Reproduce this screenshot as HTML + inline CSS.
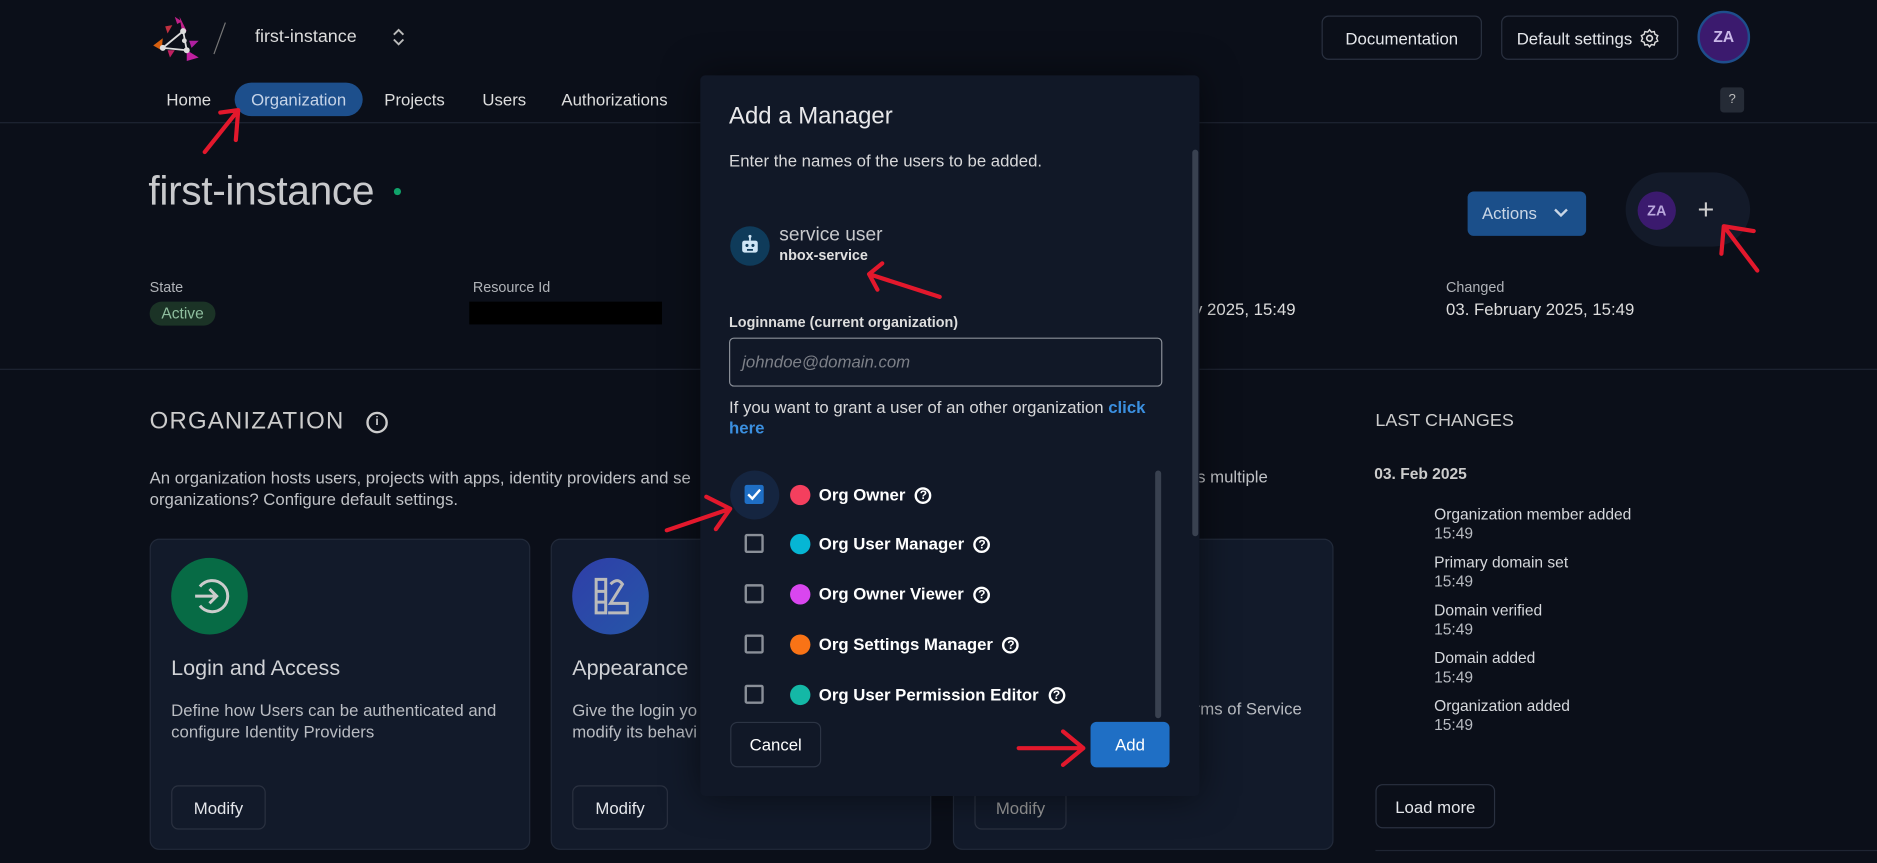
<!DOCTYPE html>
<html><head><meta charset="utf-8"><style>
html,body{margin:0;padding:0;background:#0b0f19;overflow:hidden;width:1877px;height:862px}
#s{position:absolute;left:0;top:0;width:1568px;height:721px;transform:scale(1.19707);transform-origin:0 0;font-family:"Liberation Sans",sans-serif;color:#e5e7eb}
.a{position:absolute;white-space:nowrap}
.btn{position:absolute;border:1px solid #2a3140;border-radius:6px;box-sizing:border-box;display:flex;align-items:center;justify-content:center;font-size:14px;color:#e5e7eb}
.card{position:absolute;top:450px;width:318px;height:260px;background:#121a2a;border:1px solid #222a3a;border-radius:8px;box-sizing:border-box}
.hl{position:absolute;height:1px;background:#1f2533}
.ev{position:absolute;left:1198px;font-size:13px;color:#d6d8dc;line-height:16px}
.ev span{color:#b9bcc2}
.cb{position:absolute;left:622px;width:16px;height:16px;border:2px solid #8a8f98;border-radius:2px;box-sizing:border-box}
.dot{position:absolute;left:660px;width:17px;height:17px;border-radius:50%}
.rl{position:absolute;left:684px;font-size:14px;color:#fff;font-weight:bold}
.q{display:inline-block;width:14px;height:14px;border:2px solid #fff;border-radius:50%;font-size:10px;text-align:center;margin-left:8px;vertical-align:middle;box-sizing:border-box;line-height:11px}
</style></head><body><div id="s">
<!-- header -->
<svg class="a" style="left:126px;top:12px" width="42" height="40" viewBox="0 0 42 40">
<polygon points="20,2 26,6 22,8" fill="#c0208a"/><polygon points="24,2 30,14 26,14" fill="#c0208a"/>
<polygon points="12,10 18,9 14,16" fill="#c03040"/><polygon points="2,26 10,20 9,30" fill="#d66010"/>
<polygon points="32,22 40,22 34,28" fill="#b020a0"/><polygon points="14,30 20,30 16,36" fill="#c02060"/>
<polygon points="30,30 40,36 30,39" fill="#c020a0"/>
<path d="M27,14 L10,28 L30,30 Z M27,14 L30,30" stroke="#ddd" stroke-width="1.5" fill="none"/>
<circle cx="27" cy="14" r="2.5" fill="#ddd"/><circle cx="10" cy="28" r="2.5" fill="#ddd"/><circle cx="30" cy="30" r="2.5" fill="#ddd"/><circle cx="28" cy="22" r="2" fill="#ddd"/>
</svg>
<div class="a" style="left:183px;top:18px;width:1px;height:28px;background:#777;transform:rotate(20deg)"></div>
<div class="a" style="left:213px;top:22px;font-size:15px;color:#ddd">first-instance</div>
<svg class="a" style="left:327px;top:22px" width="12" height="18" viewBox="0 0 12 18"><path d="M2,7 L6,3 L10,7 M2,11 L6,15 L10,11" stroke="#bbb" stroke-width="1.6" fill="none"/></svg>
<div class="btn" style="left:1104px;top:13px;width:134px;height:37px">Documentation</div>
<div class="btn" style="left:1254px;top:13px;width:148px;height:37px;justify-content:flex-start;padding-left:12px">Default settings
<svg style="margin-left:5px" width="18" height="18" viewBox="0 0 24 24"><circle cx="12" cy="12" r="3.2" stroke="#ddd" stroke-width="1.8" fill="none"/><path d="M12 2.5l2 2.6 3.2-.6.9 3.1 3 1.4-1.3 3 1.3 3-3 1.4-.9 3.1-3.2-.6-2 2.6-2-2.6-3.2.6-.9-3.1-3-1.4 1.3-3-1.3-3 3-1.4.9-3.1 3.2.6z" stroke="#ddd" stroke-width="1.6" fill="none"/></svg></div>
<div class="a" style="left:1418px;top:9px;width:40px;height:40px;border-radius:50%;background:#3b1a6e;border:2px solid #1e4e8c;color:#c9b8e8;font-size:13px;font-weight:bold;text-align:center;line-height:40px">ZA</div>
<div class="a" style="left:139px;top:75px;font-size:14px;color:#ddd">Home</div>
<div class="a" style="left:196px;top:69px;width:107px;height:28px;border-radius:14px;background:#1d4f8c;color:#c6d4e8;font-size:14px;text-align:center;line-height:28px">Organization</div>
<div class="a" style="left:321px;top:75px;font-size:14px;color:#ddd">Projects</div>
<div class="a" style="left:403px;top:75px;font-size:14px;color:#ddd">Users</div>
<div class="a" style="left:469px;top:75px;font-size:14px;color:#ddd">Authorizations</div>
<div class="a" style="left:1437px;top:73px;width:20px;height:21px;border-radius:3px;background:#252b36;color:#bbb;font-size:11px;text-align:center;line-height:21px">?</div>
<div class="hl" style="left:0;top:102px;width:1568px"></div>
<!-- title area -->
<div class="a" style="left:124px;top:141px;font-size:34px;color:#c8c9cc;letter-spacing:-0.3px">first-instance</div>
<div class="a" style="left:329px;top:157px;width:6px;height:6px;border-radius:50%;background:#10a36a"></div>
<div class="a" style="left:1226px;top:160px;width:99px;height:37px;border-radius:5px;background:#1b4f8a;color:#c9d6e6;font-size:14px;line-height:37px;padding-left:12px;box-sizing:border-box">Actions
<svg style="position:absolute;left:72px;top:13px" width="12" height="10" viewBox="0 0 12 10"><path d="M1,2 L6,7 L11,2" stroke="#c9d6e6" stroke-width="2" fill="none"/></svg></div>
<div class="a" style="left:1358px;top:144px;width:104px;height:62px;border-radius:31px;background:#131a29"></div>
<div class="a" style="left:1368px;top:160px;width:32px;height:32px;border-radius:50%;background:#3b1a6e;color:#b9a7dc;font-size:12px;font-weight:bold;text-align:center;line-height:32px">ZA</div>
<div class="a" style="left:1418px;top:162px;font-size:24px;color:#ccc">+</div>
<div class="a" style="left:125px;top:233px;font-size:12px;color:#b0b3b8">State</div>
<div class="a" style="left:125px;top:252px;width:55px;height:20px;border-radius:10px;background:#1b3326;color:#8fbf9f;font-size:13px;text-align:center;line-height:20px">Active</div>
<div class="a" style="left:395px;top:233px;font-size:12px;color:#b0b3b8">Resource Id</div>
<div class="a" style="left:392px;top:252px;width:161px;height:19px;background:#000"></div>
<div class="a" style="left:990px;top:233px;font-size:12px;color:#b0b3b8">te</div>
<div class="a" style="left:985px;top:250px;font-size:14px;color:#ddd">ary 2025, 15:49</div>
<div class="a" style="left:1208px;top:233px;font-size:12px;color:#b0b3b8">Changed</div>
<div class="a" style="left:1208px;top:250px;font-size:14px;color:#ddd">03. February 2025, 15:49</div>
<div class="hl" style="left:0;top:308px;width:1568px"></div>
<!-- org section -->
<div class="a" style="left:125px;top:341px;font-size:20px;color:#ccc;letter-spacing:1px">ORGANIZATION</div>
<div class="a" style="left:306px;top:344px;width:14px;height:14px;border:2px solid #ccc;border-radius:50%;font-size:10px;font-weight:bold;color:#ccc;text-align:center;line-height:14px">i</div>
<div class="a" style="left:125px;top:390px;font-size:14px;color:#c0c2c6;line-height:18px">An organization hosts users, projects with apps, identity providers and se<br>organizations? Configure default settings.</div>
<div class="a" style="left:1000px;top:390px;font-size:14px;color:#c0c2c6">s multiple</div>
<div class="card" style="left:125px"></div>
<div class="card" style="left:460px"></div>
<div class="card" style="left:796px"></div>
<div class="a" style="left:143px;top:466px;width:64px;height:64px;border-radius:50%;background:#076b45"></div>
<svg class="a" style="left:155px;top:478px" width="40" height="40" viewBox="0 0 40 40"><path d="M12,12 A13,13 0 1 1 12,28" stroke="#ccc" stroke-width="2.5" fill="none"/><path d="M8,20 H26 M20,14 L26,20 L20,26" stroke="#ccc" stroke-width="2.5" fill="none"/></svg>
<div class="a" style="left:478px;top:466px;width:64px;height:64px;border-radius:50%;background:linear-gradient(135deg,#2f3ea8,#2656a8)"></div>
<svg class="a" style="left:494px;top:480px" width="34" height="36" viewBox="0 0 34 36"><path d="M4,4 H12 V32 H4 Z M4,14 H12 M4,23 H12 M16,8 Q22,2 26,8 L16,24 H30 V32 H14" stroke="#bbb" stroke-width="2.5" fill="none"/></svg>
<div class="a" style="left:143px;top:548px;font-size:18px;color:#d0d2d6">Login and Access</div>
<div class="a" style="left:143px;top:584px;font-size:14px;color:#b9bcc2;line-height:18px">Define how Users can be authenticated and<br>configure Identity Providers</div>
<div class="a" style="left:478px;top:548px;font-size:18px;color:#d0d2d6">Appearance</div>
<div class="a" style="left:478px;top:584px;font-size:14px;color:#b9bcc2;line-height:18px">Give the login yo<br>modify its behavi</div>
<div class="a" style="left:998px;top:584px;font-size:14px;color:#b9bcc2">rms of Service</div>
<div class="btn" style="left:143px;top:656px;width:79px;height:37px">Modify</div>
<div class="btn" style="left:478px;top:656px;width:80px;height:37px">Modify</div>
<div class="btn" style="left:814px;top:656px;width:77px;height:37px;color:#999">Modify</div>
<!-- last changes -->
<div class="a" style="left:1149px;top:343px;font-size:15px;color:#ccc">LAST CHANGES</div>
<div class="a" style="left:1148px;top:388px;font-size:13px;color:#ccc;font-weight:bold">03. Feb 2025</div>
<div class="ev" style="top:422px">Organization member added<br><span>15:49</span></div>
<div class="ev" style="top:462px">Primary domain set<br><span>15:49</span></div>
<div class="ev" style="top:502px">Domain verified<br><span>15:49</span></div>
<div class="ev" style="top:542px">Domain added<br><span>15:49</span></div>
<div class="ev" style="top:582px">Organization added<br><span>15:49</span></div>
<div class="btn" style="left:1149px;top:655px;width:100px;height:37px">Load more</div>
<div class="hl" style="left:1149px;top:710px;width:419px"></div>
<!-- dialog -->
<div class="a" style="left:585px;top:63px;width:417px;height:602px;background:#111827;border-radius:4px;box-shadow:0 0 30px rgba(0,0,0,.5)"></div>
<div class="a" style="left:996px;top:125px;width:5px;height:323px;border-radius:3px;background:#394150"></div>
<div class="a" style="left:609px;top:86px;font-size:20px;color:#e8e8ea">Add a Manager</div>
<div class="a" style="left:609px;top:126px;font-size:14px;color:#d8d8da">Enter the names of the users to be added.</div>
<div class="a" style="left:610px;top:189px;width:33px;height:33px;border-radius:50%;background:#0f3b5a"></div>
<svg class="a" style="left:617px;top:195px" width="19" height="20" viewBox="0 0 19 20"><rect x="3" y="6" width="13" height="10" rx="2" fill="#cfe5f5"/><circle cx="7" cy="10" r="1.3" fill="#0f3b5a"/><circle cx="12" cy="10" r="1.3" fill="#0f3b5a"/><path d="M9.5,6 V3" stroke="#cfe5f5" stroke-width="1.5"/><circle cx="9.5" cy="2.5" r="1.3" fill="#cfe5f5"/><rect x="7" y="13" width="5" height="1.5" fill="#0f3b5a"/></svg>
<div class="a" style="left:651px;top:188px;font-size:16px;color:#c8c9cc">service user</div>
<div class="a" style="left:651px;top:206px;font-size:12px;color:#e0e0e0;font-weight:bold">nbox-service</div>
<div class="a" style="left:609px;top:262px;font-size:12px;color:#ddd;font-weight:bold">Loginname (current organization)</div>
<div class="a" style="left:609px;top:282px;width:362px;height:41px;border:1px solid #8a8f98;border-radius:4px;box-sizing:border-box"></div>
<div class="a" style="left:620px;top:294px;font-size:14px;color:#7d8088;font-style:italic">johndoe@domain.com</div>
<div class="a" style="left:609px;top:332px;font-size:14px;color:#d8d8da;line-height:17px">If you want to grant a user of an other organization <b style="color:#3b8fdf">click</b><br><b style="color:#3b8fdf">here</b></div>
<div class="a" style="left:965px;top:393px;width:5px;height:207px;border-radius:3px;background:#394150"></div>
<div class="a" style="left:610px;top:393px;width:41px;height:41px;border-radius:50%;background:#152540"></div>
<div class="cb" style="top:405px;background:#1f6fc5;border-color:#1f6fc5"></div>
<svg class="a" style="left:623px;top:406px" width="14" height="14" viewBox="0 0 14 14"><path d="M2,7 L5.5,10.5 L12,3" stroke="#fff" stroke-width="2" fill="none"/></svg>
<div class="dot" style="top:405px;background:#f43f5e"></div><div class="rl" style="top:405px">Org Owner<span class="q">?</span></div>
<div class="cb" style="top:446px"></div><div class="dot" style="top:446px;background:#06b6d4"></div><div class="rl" style="top:446px">Org User Manager<span class="q">?</span></div>
<div class="cb" style="top:488px"></div><div class="dot" style="top:488px;background:#d946ef"></div><div class="rl" style="top:488px">Org Owner Viewer<span class="q">?</span></div>
<div class="cb" style="top:530px"></div><div class="dot" style="top:530px;background:#f97316"></div><div class="rl" style="top:530px">Org Settings Manager<span class="q">?</span></div>
<div class="cb" style="top:572px"></div><div class="dot" style="top:572px;background:#14b8a6"></div><div class="rl" style="top:572px">Org User Permission Editor<span class="q">?</span></div>
<div class="btn" style="left:610px;top:603px;width:76px;height:38px;border-color:#2c3444;color:#fff">Cancel</div>
<div class="a" style="left:911px;top:603px;width:66px;height:38px;border-radius:5px;background:#1f6fc5;color:#fff;font-size:14px;text-align:center;line-height:38px">Add</div>
<!-- red arrows -->
<svg class="a" style="left:0;top:0" width="1568" height="721" viewBox="0 0 1568 721">
<g stroke="#e3182c" stroke-width="3.5" fill="none" stroke-linecap="round" stroke-linejoin="round">
<path d="M171,127 L199,92 M184,94 L199,92 L197,117"/>
<path d="M785,248 L726,229 M737,220 L726,229 L733,242"/>
<path d="M557,443 L610,425 M590,415 L610,425 L598,442"/>
<path d="M851,625 L905,625 M888,611 L905,625 L888,639"/>
<path d="M1468,226 L1440,189 M1465,193 L1440,189 L1438,212"/>
</g></svg>
</div></body></html>
